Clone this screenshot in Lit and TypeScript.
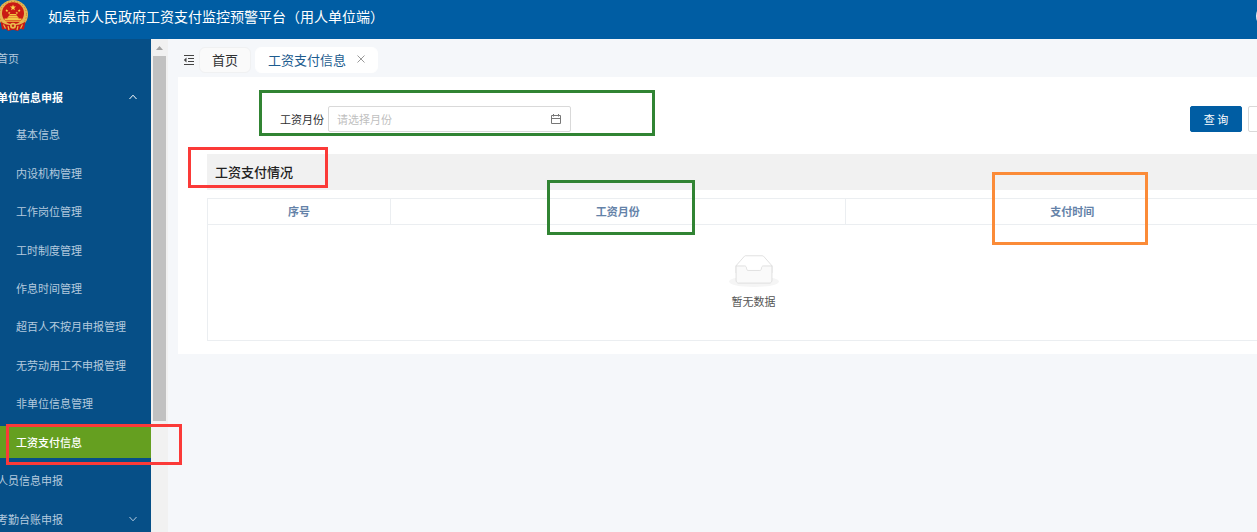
import { LitElement, html, css, svg } from "lit";
import { customElement, state } from "lit/decorators.js";
import { classMap } from "lit/directives/class-map.js";

const starPath = (cx: number, cy: number, r: number) => {
  const pts: string[] = [];
  for (let i = 0; i < 10; i++) {
    const a = -Math.PI / 2 + (i * Math.PI) / 5;
    const k = i % 2 ? r * 0.4 : r;
    pts.push(`${(cx + k * Math.cos(a)).toFixed(2)},${(cy + k * Math.sin(a)).toFixed(2)}`);
  }
  return pts.join(" ");
};

@customElement("national-emblem")
class NationalEmblem extends LitElement {
  static styles = css`
    :host { display: block; width: 32px; height: 32px; }
    svg { display: block; width: 100%; height: 100%; }
  `;
  render() {
    const stars = [[16, 7.6, 3.2], [9.8, 10.6, 1.6], [12.2, 13, 1.4], [19.8, 13, 1.4], [22.2, 10.6, 1.6]];
    return html`<svg viewBox="0 0 32 32" aria-hidden="true">
      <ellipse cx="16" cy="14.5" rx="15" ry="14.5" fill="#e6b552" />
      <ellipse cx="16" cy="14.5" rx="13.500" ry="13" fill="none" stroke="#c08428" stroke-width="1" stroke-dasharray="1.200 1.800" />
      <circle cx="16" cy="13.2" r="11" fill="#c91a14" />
      ${stars.map(([x, y, r]) => svg`<polygon points=${starPath(x, y, r)} fill="#fbd54e" />`)}
      <path d="M12 15.2l1-1.2h6l1 1.2zM11 17l1-1.3h8l1 1.3zM7.5 20v-1.6h3V17.2h11v1.2h3V20zM6.8 20.6h18.4v1.2H6.8z" fill="#f3c443" />
      <path d="M3.500 21.500c3.500 3 8 3.600 12.500 3.600s9-.600 12.500-3.600l-1.500 8-4-.500-2 2-5-1.200-5 1.200-2-2-4 .500z" fill="#c91a14" />
      <circle cx="16" cy="25.800" r="3" fill="#e9ba4a" />
      <circle cx="16" cy="25.800" r="1.200" fill="#c62a18" />
      <path d="M6.500 24.500l2 4M25.500 24.500l-2 4M11 26l1 4M21 26l-1 4" stroke="#e9ba4a" stroke-width="1.200" />
    </svg>`;
  }
}

@customElement("side-menu")
class SideMenu extends LitElement {
  @state() private active = "工资支付信息";
  private entries = [
    "基本信息", "内设机构管理", "工作岗位管理", "工时制度管理", "作息时间管理",
    "超百人不按月申报管理", "无劳动用工不申报管理", "非单位信息管理", "工资支付信息",
  ];
  static styles = css`
    :host { display: block; background: #064f87; overflow: hidden; }
    ul { list-style: none; margin: 0; padding: 0; }
    a { box-sizing: border-box; display: flex; align-items: center; color: #b4cade; text-decoration: none; font-size: 11px; }
    .top { height: 39px; padding: 0 13px 1px 21px; justify-content: space-between; }
    .open { color: #fff; font-weight: 600; }
    .sub { display: grid; grid-auto-rows: 1fr; gap: 6px; height: 340px; padding: 1px 0 3px; }
    .item { height: 100%; padding-left: 40px; }
    .item.active { background: #659f20; color: #fff; font-weight: 500; }
    svg { width: 10px; height: 10px; fill: none; stroke: currentColor; }
  `;
  private pick(e: Event, name: string) {
    e.preventDefault();
    this.active = name;
  }
  render() {
    return html`<nav><ul>
      <li><a class="top" href="#home">首页</a></li>
      <li>
        <a class="top open" href="#unit">单位信息申报
          <svg viewBox="0 0 10 10"><path d="M1.500 7L5 3.200 8.500 7" /></svg></a>
        <ul class="sub">
          ${this.entries.map((n) => html`<li><a href="#item"
            class=${classMap({ item: true, active: n === this.active })}
            @click=${(e: Event) => this.pick(e, n)}>${n}</a></li>`)}
        </ul>
      </li>
      <li><a class="top" href="#staff">人员信息申报</a></li>
      <li><a class="top" href="#attendance">考勤台账申报
        <svg viewBox="0 0 10 10"><path d="M1.500 3L5 6.800 8.500 3" /></svg></a></li>
    </ul></nav>`;
  }
}

@customElement("pay-panel")
class PayPanel extends LitElement {
  static styles = css`
    :host { display: block; background: #fff; padding: 29px 27px 13px 29px; color: #303133; }
    form { display: flex; align-items: center; gap: 6px; padding-left: 73px; margin-bottom: 22px; }
    label { font-size: 11px; margin-right: -2px; }
    .field { position: relative; flex: 0 0 243px; display: flex; }
    input {
      box-sizing: border-box; width: 100%; height: 26px; padding: 0 30px 1px 8px;
      border: 1px solid #d9d9d9; border-radius: 2px; outline: 0;
      font: inherit; font-size: 11px; color: #303133;
    }
    input::placeholder { color: #bfbfbf; opacity: 1; }
    .calendar { position: absolute; right: 9px; top: 7px; width: 12px; height: 12px; }
    button {
      box-sizing: border-box; width: 52px; height: 26px; padding: 0 0 1px; font: inherit; font-size: 11px;
      border: 1px solid #d9d9d9; border-radius: 2px; background: #fff; color: #303133;
    }
    .primary { margin-left: auto; background: #005da3; border-color: #005da3; color: #fff; }
    h2 {
      margin: 0 0 8px; padding: 0 8px; line-height: 36px;
      background: #f1f1f1; font-size: 13px; font-weight: 500; color: #222;
    }
    table { width: 100%; table-layout: fixed; border-collapse: collapse; }
    th, td { border: 1px solid #ebeef1; padding: 0; }
    th { line-height: 25px; font-size: 11px; font-weight: 600; color: #6482a8; }
    .narrow { width: 16.667%; }
    .empty { display: flex; flex-direction: column; align-items: center; gap: 6px; padding: 30px 0 31px; font-size: 11px; line-height: 16px; color: #555; }
    .empty svg { width: 50px; height: 32px; }
  `;
  render() {
    return html`
      <form @submit=${(e: Event) => e.preventDefault()}>
        <label for="month">工资月份</label>
        <div class="field">
          <input id="month" type="text" placeholder="请选择月份" />
          <svg class="calendar" viewBox="0 0 12 12" fill="none" stroke="#777" aria-hidden="true">
            <path d="M1.500 2.500h9v8h-9zM1.500 5.500h9M3.500 1v2.500M8.500 1v2.500" />
          </svg>
        </div>
        <button class="primary" type="submit">查 询</button>
        <button type="reset">重 置</button>
      </form>
      <h2>工资支付情况</h2>
      <table>
        <thead><tr><th class="narrow">序号</th><th>工资月份</th><th>支付时间</th></tr></thead>
        <tbody><tr><td colspan="3"><div class="empty">
          <svg viewBox="0 0 64 41" aria-hidden="true"><g transform="translate(0 1)" fill="none" fill-rule="evenodd">
            <ellipse fill="#f5f5f5" cx="32" cy="33" rx="32" ry="7" />
            <g fill-rule="nonzero" stroke="#d9d9d9">
              <path d="M55 12.760L44.854 1.258C44.367.474 43.656 0 42.907 0H21.093c-.749 0-1.460.474-1.947 1.257L9 12.761V22h46v-9.240z" fill="#fff" />
              <path d="M41.613 15.931c0-1.605.994-2.930 2.227-2.931H55v18.137C55 33.260 53.680 35 52.050 35h-40.100C10.320 35 9 33.259 9 31.137V13h11.160c1.233 0 2.227 1.323 2.227 2.928v.022c0 1.605 1.005 2.901 2.237 2.901h14.752c1.232 0 2.237-1.308 2.237-2.913v-.007z" fill="#fafafa" />
            </g></g></svg>
          <span>暂无数据</span>
        </div></td></tr></tbody>
      </table>`;
  }
}

@customElement("app-root")
class AppRoot extends LitElement {
  static styles = css`
    :host {
      display: block; position: relative; height: 100vh; overflow: hidden; background: #f5f7fa;
      font-family: "Noto Sans CJK SC", "Noto Sans", sans-serif;
    }
    .shell { display: flex; flex-direction: column; height: 100%; margin: 0 -80px 0 -24px; }
    header {
      box-sizing: border-box; flex: 0 0 39px; display: flex; align-items: center; gap: 19px;
      padding: 0 57px 7px 21px; background: #005da3; color: #fff;
    }
    h1 { flex: 1; margin: 0; font-size: 14px; font-weight: 400; }
    .avatar { width: 24px; height: 24px; border-radius: 50%; background: #e6edf3; }
    .body { flex: 1; min-height: 0; display: flex; }
    side-menu { flex: 0 0 175px; }
    .scrollbar {
      box-sizing: border-box; flex: 0 0 17px; display: flex; flex-direction: column; align-items: center;
      padding: 0 2px; background: #f1f1f1;
    }
    .arrow { flex: 0 0 17px; width: 7px; }
    .thumb { width: 13px; height: 74%; background: #c1c1c1; }
    main { flex: 1; min-width: 0; padding: 8px 10px 0; }
    .tabs { display: flex; align-items: center; gap: 4px; padding-left: 5px; margin-bottom: 4px; }
    .fold { width: 12px; height: 12px; }
    .tab {
      box-sizing: border-box; display: flex; align-items: center; gap: 11px; height: 26px; padding: 0 12px 2px;
      border: 1px solid #f0f1f2; border-radius: 6px; background: #fafafa;
      color: #303133; font-size: 13px; text-decoration: none;
    }
    .current { background: #fff; border-color: #fff; color: #1d5c8f; }
    .close { width: 8px; height: 8px; }
    .mark { position: absolute; box-sizing: border-box; border: 3px solid; pointer-events: none; }
    .red { border-color: #fb3a38; }
    .green { border-color: #318433; }
    .orange { border-color: #fb8b38; }
    .menu-mark { left: 6px; top: 424px; width: 176px; height: 41px; }
    .title-mark { left: 188px; top: 147px; width: 140px; height: 41px; }
    .month-mark { left: 259px; top: 90px; width: 396px; height: 46px; }
    .column-mark { left: 547px; top: 180px; width: 148px; height: 55px; }
    .time-mark { left: 992px; top: 172px; width: 156px; height: 73px; }
  `;
  render() {
    return html`
      <div class="shell">
        <header>
          <national-emblem></national-emblem>
          <h1>如皋市人民政府工资支付监控预警平台（用人单位端）</h1>
          <span class="avatar"></span>
        </header>
        <div class="body">
          <side-menu></side-menu>
          <div class="scrollbar" aria-hidden="true">
            <svg class="arrow" viewBox="0 0 7 17"><path d="M0 11l3.500-4L7 11z" fill="#a3a3a3" /></svg>
            <div class="thumb"></div>
          </div>
          <main>
            <div class="tabs">
              <svg class="fold" viewBox="0 0 12 12" fill="none" stroke="#444" aria-hidden="true">
                <path d="M1 1.500h10M5 4.500h6M5 7.500h6M1 10.500h10" /><path d="M3.500 3.500v5L.800 6z" fill="#444" stroke="none" />
              </svg>
              <a class="tab" href="#home">首页</a>
              <a class="tab current" href="#pay">工资支付信息
                <svg class="close" viewBox="0 0 8 8" stroke="#999" aria-hidden="true"><path d="M.5.5l7 7M7.500.5l-7 7" /></svg>
              </a>
            </div>
            <pay-panel></pay-panel>
          </main>
        </div>
      </div>
      <span class="mark red menu-mark"></span>
      <span class="mark red title-mark"></span>
      <span class="mark green month-mark"></span>
      <span class="mark green column-mark"></span>
      <span class="mark orange time-mark"></span>`;
  }
}
